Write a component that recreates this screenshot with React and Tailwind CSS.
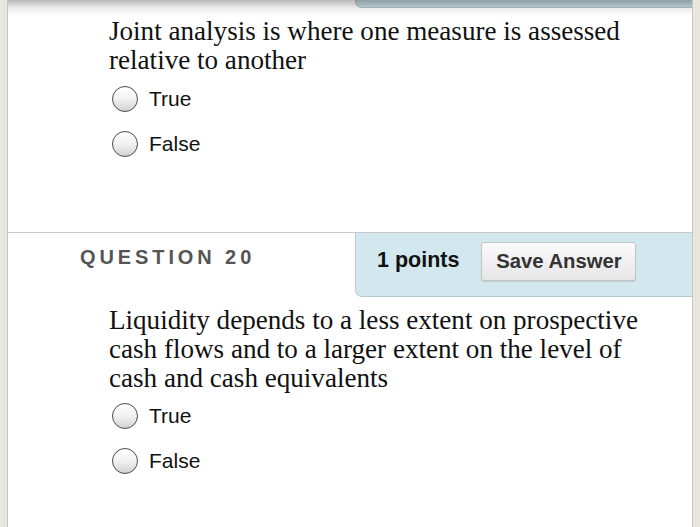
import React from "react";

function Radio({ label }) {
  return (
    <div className="flex h-[45px] items-center">
      <span className="ml-[3px] h-[26px] w-[26px] rounded-full border-[1.5px] border-[#4a4a4a] bg-gradient-to-b from-[#ffffff] via-[#f1f1f1] to-[#d2d2d2] shadow-[inset_0_1px_1px_rgba(255,255,255,0.9)]" />
      <span className="ml-[11px] text-[21px] leading-none text-[#111] [font-family:'Liberation_Sans',Arial,sans-serif]">
        {label}
      </span>
    </div>
  );
}

function QText({ children }) {
  return (
    <p className="w-[548px] text-[27.1px] leading-[29px] text-[#111] [font-family:'Liberation_Serif','Times_New_Roman',serif]">
      {children}
    </p>
  );
}

export default function App() {
  return (
    <div className="flex h-[527px] w-[700px] overflow-hidden bg-[#e8e5dc]">
      <div className="w-[8px] border-r border-[#c9c6be] bg-[#e9e6dd]" />
      <div className="relative flex flex-1 flex-col bg-white">
        {/* top shadow from previous panel */}
        <div className="pointer-events-none absolute left-0 right-0 top-0 h-[16px] bg-gradient-to-b from-[rgba(0,0,0,0.28)] via-[rgba(0,0,0,0.08)] to-transparent" />
        <div className="flex h-[8px]">
          <div className="flex-1" />
          <div className="w-[337px] rounded-bl-[7px] border-b border-l border-[#a9c0c8] bg-[#c6dce3]" />
        </div>

        {/* Question 19 remainder */}
        <div className="h-[224px] pl-[101px] pt-[9px]">
          <QText>Joint analysis is where one measure is assessed relative to another</QText>
          <div className="pt-[1px]">
            <Radio label="True" />
            <Radio label="False" />
          </div>
        </div>

        {/* Question 20 */}
        <div className="flex-1 border-t border-[#c8c8c8]">
          <div className="flex h-[64px]">
            <div className="flex flex-1 items-center pl-[72px] pb-[17px]">
              <span className="text-[20px] font-bold tracking-[3.9px] text-[#555] [font-family:'Liberation_Sans',Arial,sans-serif]">
                QUESTION 20
              </span>
            </div>
            <div className="flex w-[337px] items-center rounded-bl-[7px] border-b border-l border-[#b3cbd3] bg-[#d3e8ee] pb-[9px] pl-[21px]">
              <span className="text-[21.5px] font-bold text-[#111] [font-family:'Liberation_Sans',Arial,sans-serif]">
                1 points
              </span>
              <button className="ml-[22px] mt-[2px] flex h-[39px] w-[155px] items-center justify-center rounded-[3px] border border-[#c4c4c4] bg-gradient-to-b from-[#fbfbfb] to-[#e6e6e6] text-[20.3px] font-bold text-[#333] shadow-[0_1px_1px_rgba(0,0,0,0.12)] [font-family:'Liberation_Sans',Arial,sans-serif]">
                Save Answer
              </button>
            </div>
          </div>
          <div className="pl-[101px] pt-[9px]">
            <QText>
              Liquidity depends to a less extent on prospective cash flows and to a larger extent on the level of cash and cash equivalents
            </QText>
            <div>
              <Radio label="True" />
              <Radio label="False" />
            </div>
          </div>
        </div>
      </div>
      <div className="w-[8px] border-l border-[#c9c6be] bg-[#e9e6dd]" />
    </div>
  );
}
